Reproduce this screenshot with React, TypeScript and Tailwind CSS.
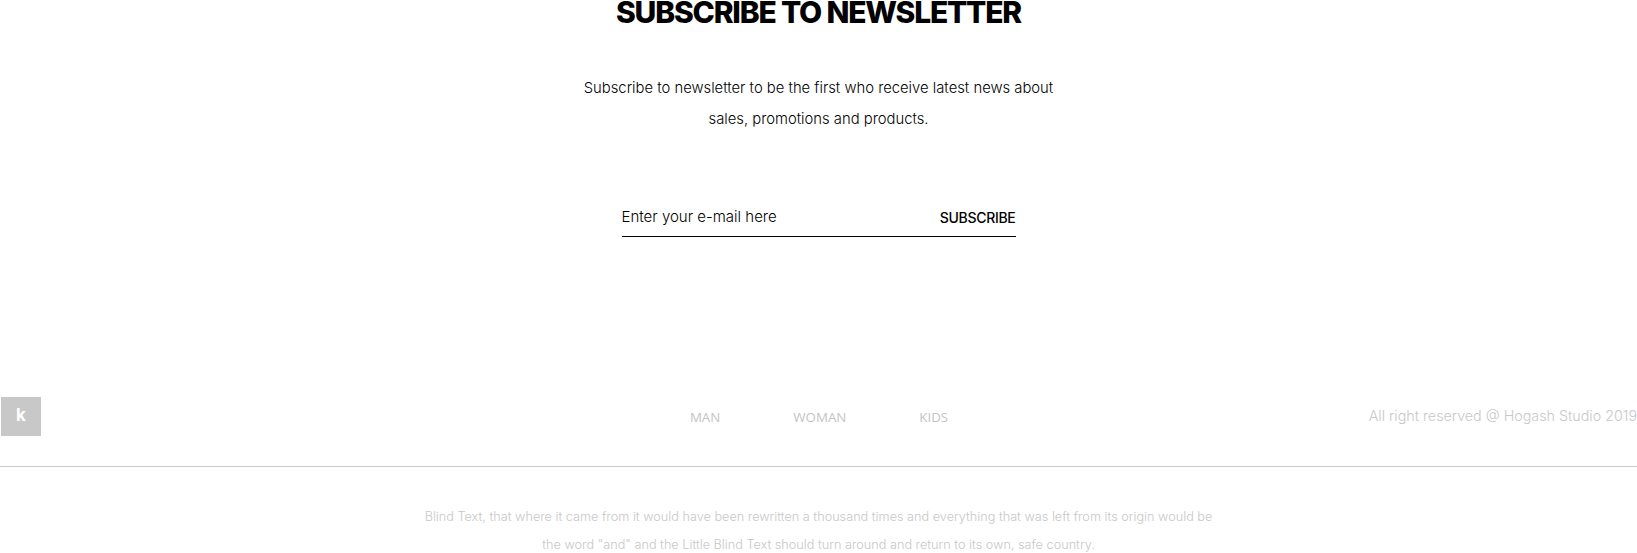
export default function App() {
	return (
		<div className="w-[1637px] h-[553px] overflow-hidden bg-white font-['Inter','Open_Sans',sans-serif]">
			<section className="flex flex-col items-center">
				<h2 className="-mt-[8px] text-[30px] font-extrabold leading-[40px] tracking-[-1.2px] text-black">
					SUBSCRIBE TO NEWSLETTER
				</h2>
				<p className="mt-[41px] w-[500px] text-center text-[14.8px] font-light leading-[31px] text-black">
					Subscribe to newsletter to be the first who receive latest news about sales, promotions and products.
				</p>
				<form className="mt-[71px] flex w-[394px] items-center border-b border-black pb-[7px]" onSubmit={(e) => e.preventDefault()}>
					<input
						type="email"
						placeholder="Enter your e-mail here"
						className="flex-1 bg-transparent text-[15px] font-light text-black outline-none placeholder:text-black"
					/>
					<button type="submit" className="text-[14px] font-medium tracking-[-0.3px] text-black">
						SUBSCRIBE
					</button>
				</form>
			</section>
			<footer className="mt-[160px]">
				<div className="grid grid-cols-[1fr_auto_1fr] items-center pl-px">
					<div>
						<span className="flex h-[39px] w-[40px] items-center justify-center bg-[#c8c8c8] text-[17px] font-bold text-white">
							k
						</span>
					</div>
					<nav className="flex gap-[73px] pt-[3px] font-['Open_Sans',sans-serif] text-[13.3px] text-[#c4c4c4]">
						<a href="#">MAN</a>
						<a href="#">WOMAN</a>
						<a href="#">KIDS</a>
					</nav>
					<p className="-mt-[1px] text-right text-[14.3px] font-light text-[#c8c8c8]">
						All right reserved @ Hogash Studio 2019
					</p>
				</div>
				<hr className="mt-[30px] border-t border-[#cccccc]" />
				<p className="mx-auto mt-[36px] w-[800px] text-center text-[12.7px] font-light leading-[28px] text-[#c8c8c8]">
					Blind Text, that where it came from it would have been rewritten a thousand times and everything that was left from its origin would be the word "and" and the Little Blind Text should turn around and return to its own, safe country.
				</p>
			</footer>
		</div>
	);
}
